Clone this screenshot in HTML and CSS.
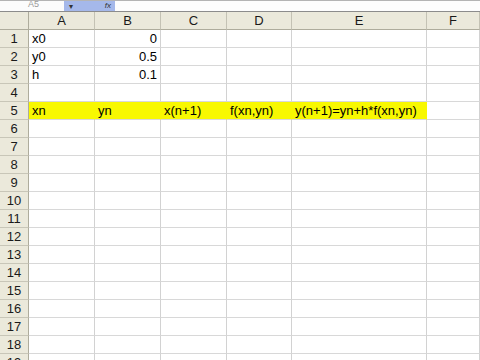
FILE: index.html
```html
<!DOCTYPE html>
<html>
<head>
<meta charset="utf-8">
<link rel="stylesheet" href="styles.css">
</head>
<body>
<div class="fbar">
  <div class="namebox">A5</div>
  <div class="nbtn"><span class="arrow">&#9662;</span><span class="fx">fx</span></div>
  <div class="formula"></div>
</div>
<div class="sheet">
  <div class="corner"></div><div class="ch">A</div><div class="ch">B</div><div class="ch">C</div><div class="ch">D</div><div class="ch">E</div><div class="ch">F</div>
  <div class="rh">1</div><div class="c">x0</div><div class="c num">0</div><div class="c"></div><div class="c"></div><div class="c"></div><div class="c"></div>
  <div class="rh">2</div><div class="c">y0</div><div class="c num">0.5</div><div class="c"></div><div class="c"></div><div class="c"></div><div class="c"></div>
  <div class="rh">3</div><div class="c">h</div><div class="c num">0.1</div><div class="c"></div><div class="c"></div><div class="c"></div><div class="c"></div>
  <div class="rh">4</div><div class="c"></div><div class="c"></div><div class="c"></div><div class="c"></div><div class="c"></div><div class="c"></div>
  <div class="rh">5</div><div class="c hl">xn</div><div class="c hl">yn</div><div class="c hl">x(n+1)</div><div class="c hl">f(xn,yn)</div><div class="c hl">y(n+1)=yn+h*f(xn,yn)</div><div class="c"></div>
  <div class="rh">6</div><div class="c"></div><div class="c"></div><div class="c"></div><div class="c"></div><div class="c"></div><div class="c"></div>
  <div class="rh">7</div><div class="c"></div><div class="c"></div><div class="c"></div><div class="c"></div><div class="c"></div><div class="c"></div>
  <div class="rh">8</div><div class="c"></div><div class="c"></div><div class="c"></div><div class="c"></div><div class="c"></div><div class="c"></div>
  <div class="rh">9</div><div class="c"></div><div class="c"></div><div class="c"></div><div class="c"></div><div class="c"></div><div class="c"></div>
  <div class="rh">10</div><div class="c"></div><div class="c"></div><div class="c"></div><div class="c"></div><div class="c"></div><div class="c"></div>
  <div class="rh">11</div><div class="c"></div><div class="c"></div><div class="c"></div><div class="c"></div><div class="c"></div><div class="c"></div>
  <div class="rh">12</div><div class="c"></div><div class="c"></div><div class="c"></div><div class="c"></div><div class="c"></div><div class="c"></div>
  <div class="rh">13</div><div class="c"></div><div class="c"></div><div class="c"></div><div class="c"></div><div class="c"></div><div class="c"></div>
  <div class="rh">14</div><div class="c"></div><div class="c"></div><div class="c"></div><div class="c"></div><div class="c"></div><div class="c"></div>
  <div class="rh">15</div><div class="c"></div><div class="c"></div><div class="c"></div><div class="c"></div><div class="c"></div><div class="c"></div>
  <div class="rh">16</div><div class="c"></div><div class="c"></div><div class="c"></div><div class="c"></div><div class="c"></div><div class="c"></div>
  <div class="rh">17</div><div class="c"></div><div class="c"></div><div class="c"></div><div class="c"></div><div class="c"></div><div class="c"></div>
  <div class="rh">18</div><div class="c"></div><div class="c"></div><div class="c"></div><div class="c"></div><div class="c"></div><div class="c"></div>
  <div class="rh">19</div><div class="c"></div><div class="c"></div><div class="c"></div><div class="c"></div><div class="c"></div><div class="c"></div>
</div>
</body>
</html>
```
FILE: styles.css
```css
html, body {
  margin: 0;
  padding: 0;
  width: 480px;
  height: 360px;
  overflow: hidden;
  background: #ffffff;
  font-family: "Liberation Sans", Arial, sans-serif;
  color: #000;
}
.fbar {
  display: flex;
  height: 10px;
  border-top: 1px solid #b4b4b4;
  border-bottom: 1px solid #8c8c8c;
  background: #fafafa;
  overflow: hidden;
}
.namebox {
  width: 64px;
  box-sizing: border-box;
  padding-left: 28px;
  font-size: 9px;
  line-height: 7px;
  color: #9a9a9a;
  background: #fcfcfc;
}
.nbtn {
  width: 51px;
  display: flex;
  justify-content: space-between;
  align-items: center;
  padding: 0 4px 0 5px;
  box-sizing: border-box;
  background: #a5b8ea;
  font-size: 8px;
  color: #333;
}
.nbtn .fx {
  font-style: italic;
  font-size: 8px;
  line-height: 6px;
}
.formula {
  flex: 1;
  background: #fdfdfd;
}
.sheet {
  display: grid;
  grid-template-columns: 29px 66px 66px 66px 65px 135px 53px;
  grid-auto-rows: 18px;
}
.corner, .ch, .rh {
  background: #ebe9db;
  box-sizing: border-box;
  font-size: 13px;
  line-height: 17px;
  text-align: center;
  color: #1a1a1a;
}
.corner {
  border-right: 1px solid #aeac9c;
  border-bottom: 1px solid #aeac9c;
}
.ch {
  border-right: 1px solid #c4c2b4;
  border-bottom: 1px solid #aeac9c;
}
.rh {
  border-right: 1px solid #aeac9c;
  border-bottom: 1px solid #c8c6b8;
}
.c {
  box-sizing: border-box;
  border-right: 1px solid #d2d2d2;
  border-bottom: 1px solid #d8d8d8;
  font-size: 13px;
  line-height: 17px;
  padding: 0 3px;
  white-space: nowrap;
  overflow: hidden;
}
.num {
  text-align: right;
}
.hl {
  background: #f8f800;
  border-right-color: #f8f800;
}
```
